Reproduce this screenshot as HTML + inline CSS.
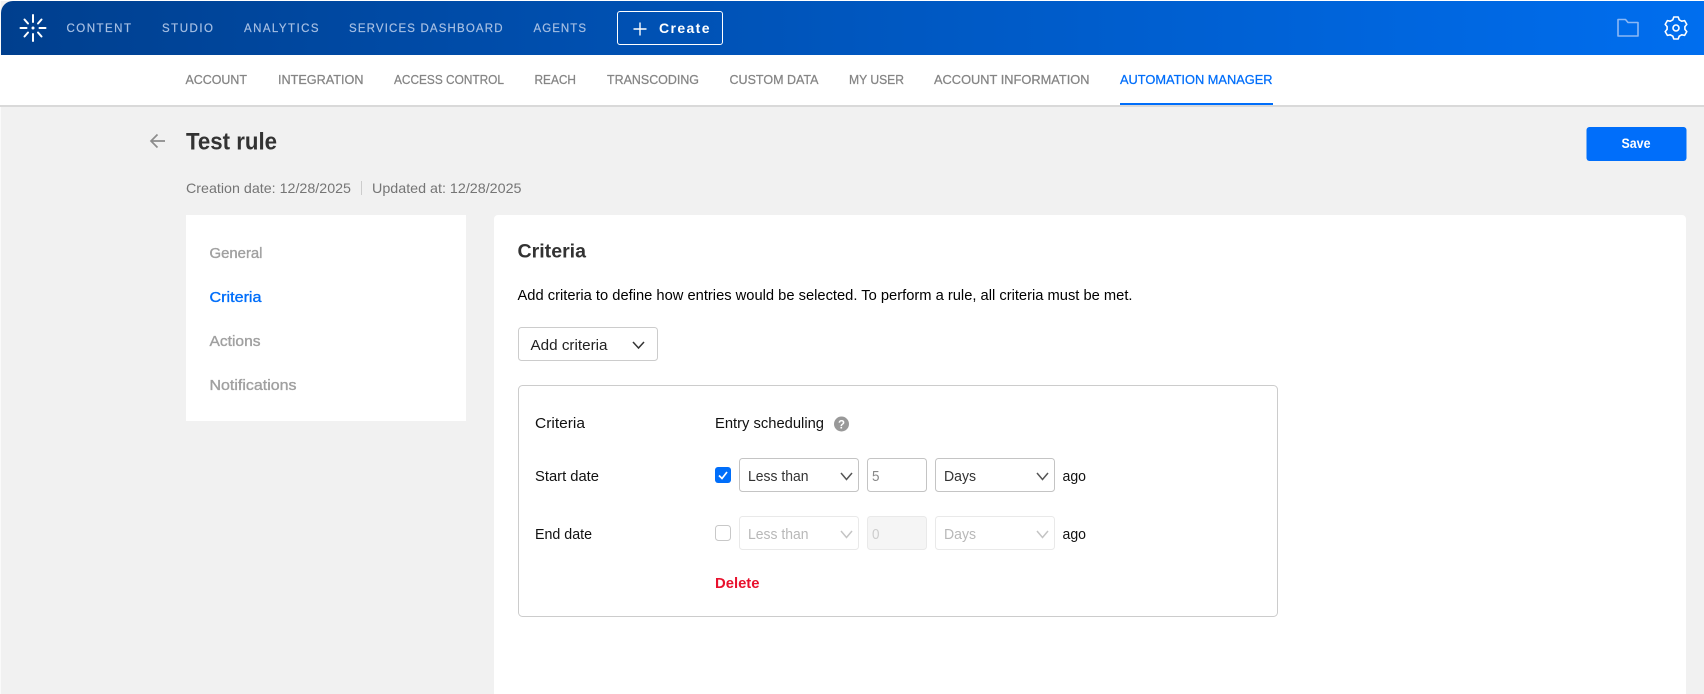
<!DOCTYPE html>
<html lang="en">
<head>
<meta charset="utf-8">
<title>Test rule</title>
<style>
html,body{margin:0;padding:0;width:1704px;height:694px;overflow:hidden;background:#f1f1f1}
svg{display:block;position:absolute;left:0;top:0}
text{font-family:"Liberation Sans",sans-serif}
.top{font-size:11.5px;fill:#a6bfe3;stroke:#a6bfe3;stroke-width:.2}
.sub{font-size:12.5px;fill:#858585;stroke:#858585;stroke-width:.25}
.body{font-size:14.5px;fill:#111}
.side{font-size:14.5px;fill:#a0a0a0;stroke:#a0a0a0;stroke-width:.35}
.meta{font-size:14px;fill:#757575}
.dis{font-size:14.5px;fill:#b8b8b8}
</style>
</head>
<body>
<svg width="1704" height="694" viewBox="0 0 1704 694" xmlns="http://www.w3.org/2000/svg">
<defs>
<linearGradient id="g" x1="0" y1="0" x2="1" y2="0">
<stop offset="0" stop-color="#003f8e"/>
<stop offset="1" stop-color="#006eef"/>
</linearGradient>
</defs>
<rect width="1704" height="694" fill="#f1f1f1"/>
<rect x="0" y="0" width="1" height="694" fill="#fafafa"/>
<rect x="0" y="0" width="1704" height="1" fill="#fff"/>
<rect x="0" y="55" width="1704" height="50" fill="#fff"/>
<rect x="0" y="105" width="1704" height="2" fill="#d9d9d9"/>
<path d="M1 55V13A12 12 0 0 1 13 1H1704V55Z" fill="url(#g)"/>

<g stroke="#fff" stroke-width="2" stroke-linecap="round" fill="none">
<path d="M33 15V22M33 34V41M20.500 28H26.500M39.500 28H45.500M24.500 19.500L28 23.500M38 32.500L41.500 36.500M24.500 36.500L28 32.500M38 23.500L41.500 19.500"/>
</g>
<circle cx="33" cy="28" r="1.500" fill="#fff"/>

<text class="top" x="66.500" y="32" textLength="64.500" lengthAdjust="spacing">CONTENT</text>
<text class="top" x="162" y="32" textLength="51" lengthAdjust="spacing">STUDIO</text>
<text class="top" x="244" y="32" textLength="74.500" lengthAdjust="spacing">ANALYTICS</text>
<text class="top" x="349" y="32" textLength="153.500" lengthAdjust="spacing">SERVICES DASHBOARD</text>
<text class="top" x="533.500" y="32" textLength="52.500" lengthAdjust="spacing">AGENTS</text>

<rect x="617.500" y="11.500" width="105" height="33" rx="2.500" fill="none" stroke="#fff" stroke-width="1"/>
<path d="M640 22.500V35.500M633.500 29H646.500" stroke="#fff" stroke-width="1.400" fill="none"/>
<text x="659" y="33" font-size="14" font-weight="700" fill="#fff" textLength="50.500" lengthAdjust="spacing">Create</text>

<path d="M1618 36V19.500H1625.500L1628 22.500H1638V36Z" fill="none" stroke="#8cb8f5" stroke-width="1.600" stroke-linejoin="round"/>
<g fill="none" stroke="#fff" stroke-width="1.600" stroke-linejoin="round">
<path d="M1673.800 18H1678.200L1679.200 20.800L1681.700 22.200L1684.600 21.600L1686.800 25.400L1684.900 27.600V30.400L1686.800 32.600L1684.600 36.400L1681.700 35.800L1679.200 37.200L1678.200 40H1673.800L1672.800 37.200L1670.300 35.800L1667.400 36.400L1665.200 32.600L1667.100 30.400V27.600L1665.200 25.400L1667.400 21.600L1670.300 22.200L1672.800 20.800Z" transform="translate(0 -1)"/>
<circle cx="1676" cy="28" r="3"/>
</g>

<text class="sub" x="185.500" y="84" textLength="61.500" lengthAdjust="spacingAndGlyphs">ACCOUNT</text>
<text class="sub" x="278" y="84" textLength="85.500" lengthAdjust="spacingAndGlyphs">INTEGRATION</text>
<text class="sub" x="394" y="84" textLength="110" lengthAdjust="spacingAndGlyphs">ACCESS CONTROL</text>
<text class="sub" x="534.500" y="84" textLength="41.500" lengthAdjust="spacingAndGlyphs">REACH</text>
<text class="sub" x="607" y="84" textLength="92" lengthAdjust="spacingAndGlyphs">TRANSCODING</text>
<text class="sub" x="729.500" y="84" textLength="89" lengthAdjust="spacingAndGlyphs">CUSTOM DATA</text>
<text class="sub" x="849" y="84" textLength="55" lengthAdjust="spacingAndGlyphs">MY USER</text>
<text class="sub" x="934" y="84" textLength="155.500" lengthAdjust="spacingAndGlyphs">ACCOUNT INFORMATION</text>
<text class="sub" x="1120" y="84" textLength="152.500" lengthAdjust="spacingAndGlyphs" style="fill:#006efa;stroke:#006efa">AUTOMATION MANAGER</text>
<rect x="1120" y="103" width="153" height="2" fill="#006efa"/>

<path d="M165 141H151M157.500 134.500L151 141L157.500 147.500" fill="none" stroke="#8c8c8c" stroke-width="1.700"/>
<text x="186" y="149.500" font-size="24" font-weight="700" fill="#333" textLength="91" lengthAdjust="spacingAndGlyphs">Test rule</text>
<text class="meta" x="186" y="193" textLength="165" lengthAdjust="spacingAndGlyphs">Creation date: 12/28/2025</text>
<rect x="361" y="181" width="1" height="14" fill="#ccc"/>
<text class="meta" x="372" y="193" textLength="149.500" lengthAdjust="spacingAndGlyphs">Updated at: 12/28/2025</text>

<rect x="1586.500" y="127" width="100" height="34" rx="3" fill="#006efa"/>
<text x="1621.500" y="148" font-size="14" font-weight="700" fill="#fff" textLength="29" lengthAdjust="spacingAndGlyphs">Save</text>

<rect x="186" y="215" width="280" height="206" fill="#fff"/>
<text class="side" x="209.500" y="258" textLength="53" lengthAdjust="spacingAndGlyphs">General</text>
<text class="side" x="209.500" y="302" textLength="52" lengthAdjust="spacingAndGlyphs" style="fill:#006efa;stroke:#006efa">Criteria</text>
<text class="side" x="209.500" y="346" textLength="51" lengthAdjust="spacingAndGlyphs">Actions</text>
<text class="side" x="209.500" y="390" textLength="87" lengthAdjust="spacingAndGlyphs">Notifications</text>

<path d="M494 694V219A4 4 0 0 1 498 215H1682A4 4 0 0 1 1686 219V694Z" fill="#fff"/>
<text x="517.500" y="257.500" font-size="19" font-weight="700" fill="#333" textLength="68.500" lengthAdjust="spacingAndGlyphs">Criteria</text>
<text class="body" x="517.500" y="300" textLength="615" lengthAdjust="spacingAndGlyphs" style="fill:#000">Add criteria to define how entries would be selected. To perform a rule, all criteria must be met.</text>

<rect x="518.500" y="327.500" width="139" height="33" rx="3" fill="#fff" stroke="#ccc"/>
<text class="body" x="530.500" y="350" textLength="77" lengthAdjust="spacingAndGlyphs" style="fill:#222">Add criteria</text>
<path d="M633 342L638.500 348L644 342" fill="none" stroke="#333" stroke-width="1.500"/>

<rect x="518.500" y="385.500" width="759" height="231" rx="4" fill="#fff" stroke="#ccc"/>

<text class="body" x="535" y="428" textLength="50" lengthAdjust="spacingAndGlyphs">Criteria</text>
<text class="body" x="715" y="428" textLength="109" lengthAdjust="spacingAndGlyphs">Entry scheduling</text>
<circle cx="841.500" cy="424" r="7.500" fill="#999"/>
<text x="841.500" y="428.500" font-size="11.500" font-weight="700" fill="#fff" text-anchor="middle">?</text>

<text class="body" x="535" y="481" textLength="64" lengthAdjust="spacingAndGlyphs">Start date</text>
<rect x="715" y="467" width="16" height="16" rx="3" fill="#006efa"/>
<path d="M719 475.500L722 478.500L727 472" fill="none" stroke="#fff" stroke-width="1.700"/>
<rect x="739.500" y="458.500" width="119" height="33" rx="3" fill="#fff" stroke="#c4c4c4"/>
<text class="body" x="748" y="481" textLength="60.500" lengthAdjust="spacingAndGlyphs" style="fill:#333">Less than</text>
<path d="M841 473L846.500 479.500L852 473" fill="none" stroke="#555" stroke-width="1.500"/>
<rect x="867.500" y="458.500" width="59" height="33" rx="3" fill="#fff" stroke="#c4c4c4"/>
<text class="body" x="872" y="481" textLength="7.500" lengthAdjust="spacingAndGlyphs" style="fill:#888">5</text>
<rect x="935.500" y="458.500" width="119" height="33" rx="3" fill="#fff" stroke="#c4c4c4"/>
<text class="body" x="944" y="481" textLength="32" lengthAdjust="spacingAndGlyphs" style="fill:#333">Days</text>
<path d="M1037 473L1042.500 479.500L1048 473" fill="none" stroke="#555" stroke-width="1.500"/>
<text class="body" x="1062.500" y="481" textLength="23.500" lengthAdjust="spacingAndGlyphs">ago</text>

<text class="body" x="535" y="539" textLength="57" lengthAdjust="spacingAndGlyphs">End date</text>
<rect x="715.500" y="525.500" width="15" height="15" rx="3" fill="#fff" stroke="#c8c8c8"/>
<rect x="739.500" y="516.500" width="119" height="33" rx="3" fill="#fff" stroke="#e9e9e9"/>
<text class="dis" x="748" y="539" textLength="60.500" lengthAdjust="spacingAndGlyphs">Less than</text>
<path d="M841 531L846.500 537.500L852 531" fill="none" stroke="#c4c4c4" stroke-width="1.500"/>
<rect x="867.500" y="516.500" width="59" height="33" rx="3" fill="#f5f5f5" stroke="#e9e9e9"/>
<text class="dis" x="872" y="539" textLength="7.500" lengthAdjust="spacingAndGlyphs" style="fill:#ccc">0</text>
<rect x="935.500" y="516.500" width="119" height="33" rx="3" fill="#fff" stroke="#e9e9e9"/>
<text class="dis" x="944" y="539" textLength="32" lengthAdjust="spacingAndGlyphs">Days</text>
<path d="M1037 531L1042.500 537.500L1048 531" fill="none" stroke="#c4c4c4" stroke-width="1.500"/>
<text class="body" x="1062.500" y="539" textLength="23.500" lengthAdjust="spacingAndGlyphs">ago</text>

<text x="715" y="588" font-size="14.500" font-weight="700" fill="#e8112d" textLength="44.500" lengthAdjust="spacingAndGlyphs">Delete</text>
</svg>
</body>
</html>
